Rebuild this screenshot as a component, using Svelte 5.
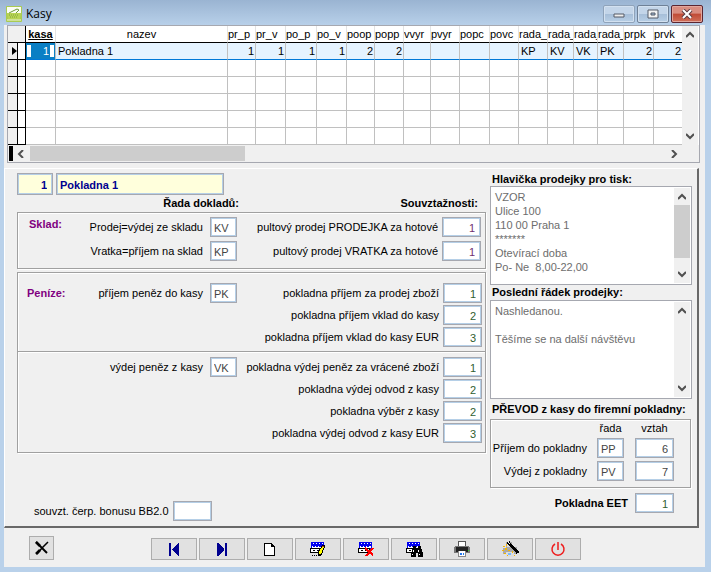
<script>
  const columns = [
    { name: "kasa", width: 30 },
    { name: "nazev" },
    { name: "pr_p", width: 28 },
    { name: "pr_v", width: 30 },
    { name: "po_p", width: 31 },
    { name: "po_v", width: 30 },
    { name: "poop", width: 28 },
    { name: "popp", width: 29 },
    { name: "vvyr", width: 27 },
    { name: "pvyr", width: 29 },
    { name: "popc", width: 30 },
    { name: "povc", width: 29 },
    { name: "rada_", width: 29, text: true },
    { name: "rada_", width: 26, text: true },
    { name: "rada_", width: 24, text: true },
    { name: "rada_", width: 26, text: true },
    { name: "prpk", width: 30 },
    { name: "prvk", width: 28 },
  ];
  const record = ["1", "Pokladna 1", "1", "1", "1", "1", "2", "2", "", "", "", "", "KP", "KV", "VK", "PK", "2", "2"];
  const emptyRows = [1, 2, 3, 4, 5];

  const groups = [
    {
      id: "sklad",
      title: "Sklad:",
      tone: "violet",
      series: [
        { label: "Prodej=výdej ze skladu", value: "KV" },
        { label: "Vratka=příjem na sklad", value: "KP" },
      ],
      relations: [
        { label: "pultový prodej PRODEJKA za hotové", value: "1" },
        { label: "pultový prodej VRATKA za hotové", value: "1" },
      ],
    },
    {
      id: "prijem",
      title: "Peníze:",
      tone: "green",
      series: [{ label: "příjem peněz do kasy", value: "PK" }],
      relations: [
        { label: "pokladna příjem za prodej zboží", value: "1" },
        { label: "pokladna příjem vklad do kasy", value: "2" },
        { label: "pokladna příjem vklad do kasy EUR", value: "3" },
      ],
    },
    {
      id: "vydej",
      title: "",
      tone: "green",
      series: [{ label: "výdej peněz z kasy", value: "VK" }],
      relations: [
        { label: "pokladna výdej peněz za vrácené zboží", value: "1" },
        { label: "pokladna výdej odvod z kasy", value: "2" },
        { label: "pokladna výběr z kasy", value: "2" },
        { label: "pokladna výdej odvod z kasy EUR", value: "3" },
      ],
    },
  ];

  const transfers = [
    { label: "Příjem do pokladny", series: "PP", relation: "6" },
    { label: "Výdej z pokladny", series: "PV", relation: "7" },
  ];

  const header = "VZOR\nUlice 100\n110 00 Praha 1\n*******\nOtevírací doba\nPo- Ne  8,00-22,00";
  const footer = "Nashledanou.\n\nTěšíme se na další návštěvu";

  const tools = [
    { icon: "first", label: "První" },
    { icon: "last", label: "Poslední" },
    { icon: "new", label: "Nový" },
    { icon: "edit", label: "Upravit" },
    { icon: "delete", label: "Smazat" },
    { icon: "find", label: "Hledat" },
    { icon: "print", label: "Tisk" },
    { icon: "wizard", label: "Průvodce" },
    { icon: "power", label: "Konec" },
  ];
</script>

{#snippet chevron(d)}
  <svg class="chevron" width="8" height="8" viewBox="0 0 8 8"><path {d} /></svg>
{/snippet}

{#snippet sheet()}
  <path fill="#0000f0" d="M2 1h13v7H2z" />
  <path fill="#fff" d="M4 2h1v1H4zM7 2h1v1H7zM10 2h1v1h-1zM13 2h1v1h-1zM3 5h11v2H3z" />
  <path fill="#0000f0" d="M4 5h2v1H4zM7 5h2v1H7zM10 5h2v1h-2z" />
  <path d="M1 7h12v5H1z" />
  <path fill="#fff" d="M2 8h10v3H2z" />
  <path d="M4 9h2v1H4zM8 9h2v1H8z" />
{/snippet}

{#snippet group(g)}
  <section class="group">
    <h2>{g.title}</h2>
    <div class="series">
      {#each g.series as f, i}
        <div class="field">
          <label for="{g.id}-s{i}">{f.label}</label>
          <input class="code" id="{g.id}-s{i}" value={f.value} />
        </div>
      {/each}
    </div>
    <div class="relations">
      {#each g.relations as f, i}
        <div class="field">
          <label for="{g.id}-r{i}">{f.label}</label>
          <input class="number {g.tone}" id="{g.id}-r{i}" value={f.value} />
        </div>
      {/each}
    </div>
  </section>
{/snippet}

<div class="window">
  <header class="titlebar">
    <svg width="16" height="16" viewBox="0 0 16 16">
      <rect width="16" height="16" rx="1" fill="#a9cb52" />
      <path d="M1 1h14v6H1z" fill="#fbfdf3" />
      <path d="M1 7h14l-1 6H2z" fill="#b9d455" />
      <path d="M3 9h10M4 11h8" stroke="#7da63a" stroke-dasharray="1 1" />
      <path d="M3 7l8-4 2 1-3 3" fill="none" stroke="#6b9b3a" />
      <path d="M1 14h14" stroke="#f4f8dc" />
    </svg>
    <h1>Kasy</h1>
    <div class="controls">
      <button aria-label="Minimalizovat">
        <svg width="12" height="10" viewBox="0 0 12 10"><path d="M1 5h10v3H1z" fill="#eee" stroke="#555b66" /></svg>
      </button>
      <button aria-label="Maximalizovat">
        <svg width="12" height="10" viewBox="0 0 12 10"><path d="M1 1h10v8H1z" fill="#f4f4f4" stroke="#555b66" /><path d="M4 4h4v2H4z" fill="#9fb9d4" stroke="#555b66" /></svg>
      </button>
      <button class="close" aria-label="Zavřít">
        <svg width="12" height="10" viewBox="0 0 12 10"><path d="M2 1l8 8M10 1L2 9" stroke="#5a3a40" stroke-width="4" /><path d="M2 1l8 8M10 1L2 9" stroke="#fff" stroke-width="2" /></svg>
      </button>
    </div>
  </header>

  <main>
    <div class="browse">
      <div class="browse-body">
        <table>
          <colgroup>
            <col style="width: 10px" />
            <col style="width: 8px" />
            {#each columns as c}
              <col style={c.width ? `width: ${c.width}px` : null} />
            {/each}
          </colgroup>
          <thead>
            <tr>
              <th class="marker" colspan="2"></th>
              {#each columns as c, i}
                <th class:key={i === 0} class:center={i === 1}>{c.name}</th>
              {/each}
            </tr>
          </thead>
          <tbody>
            <tr class="current">
              <td class="marker"><svg width="6" height="8" viewBox="0 0 6 8"><path d="M0 0l5 4-5 4z" /></svg></td>
              <td class="deleted"></td>
              {#each columns as c, i}
                {#if i === 0}
                  <td class="editing"><input aria-label="kasa" value={record[i]} /></td>
                {:else}
                  <td class:text={c.text || i === 1}>{record[i]}</td>
                {/if}
              {/each}
            </tr>
            {#each emptyRows as r}
              <tr>
                <td class="marker"></td>
                <td class="deleted"></td>
                {#each columns as c}<td></td>{/each}
              </tr>
            {/each}
          </tbody>
        </table>
        <div class="vscroll">
          {@render chevron("M0 6l4-4 4 4")}
          {@render chevron("M0 2l4 4 4-4")}
        </div>
      </div>
      <div class="hscroll">
        <span class="splitter"></span>
        {@render chevron("M6 0L2 4l4 4")}
        <div class="track"><div class="thumb"></div></div>
        {@render chevron("M2 0l4 4-4 4")}
      </div>
    </div>

    <div class="panel">
      <div class="left">
        <div class="identity">
          <input class="id" aria-label="Číslo kasy" value="1" />
          <input class="name" aria-label="Název kasy" value="Pokladna 1" />
        </div>
        <div class="captions">
          <span>Řada dokladů:</span>
          <span>Souvztažnosti:</span>
        </div>
        <div class="box stock">{@render group(groups[0])}</div>
        <div class="box money">
          {@render group(groups[1])}
          {@render group(groups[2])}
        </div>
        <div class="field bonus">
          <label for="bonus">souvzt. čerp. bonusu BB2.0</label>
          <input class="number" id="bonus" />
        </div>
      </div>

      <div class="right">
        <label class="caption" for="header">Hlavička prodejky pro tisk:</label>
        <div class="memo">
          <textarea id="header" value={header}></textarea>
          <div class="vscroll">
            {@render chevron("M0 6l4-4 4 4")}
            <div class="thumb"></div>
            {@render chevron("M0 2l4 4 4-4")}
          </div>
        </div>
        <label class="caption" for="footer">Poslední řádek prodejky:</label>
        <div class="memo">
          <textarea id="footer" value={footer}></textarea>
          <div class="vscroll">
            {@render chevron("M0 6l4-4 4 4")}
            {@render chevron("M0 2l4 4 4-4")}
          </div>
        </div>
        <h2 class="caption">PŘEVOD z kasy do firemní pokladny:</h2>
        <div class="box transfer">
          <div class="row heads">
            <span class="code">řada</span>
            <span class="number">vztah</span>
          </div>
          {#each transfers as t, i}
            <div class="row">
              <label for="transfer{i}">{t.label}</label>
              <input class="code" id="transfer{i}" value={t.series} />
              <input class="number" aria-label="{t.label} vztah" value={t.relation} />
            </div>
          {/each}
        </div>
        <div class="row eet">
          <label for="eet">Pokladna EET</label>
          <input class="number green" id="eet" value="1" />
        </div>
      </div>
    </div>

    <footer>
      <button class="cancel" aria-label="Zrušit">
        <svg width="14" height="14" viewBox="0 0 14 14" fill="none" stroke="#000"><path d="M1 1l11 11" stroke-width="2" /><path d="M13 1L7 7l-5 6" stroke-width="1.5" /><path d="M1 1l4 4M1 13l4-4" stroke-width="2.5" /></svg>
      </button>
      <div class="tools">
        {#each tools as t}
          <button aria-label={t.label}>
            <svg width="18" height="16" viewBox="0 0 18 16" shape-rendering={t.icon === "power" ? "auto" : "crispEdges"}>
              {#if t.icon === "first"}
                <path fill="#000090" d="M4 2h2v13H4zM14 2v13h-1L7 9V8l6-6z" />
              {:else if t.icon === "last"}
                <path fill="#000090" d="M12 2h2v13h-2zM4 2v13h1l6-6V8L5 2z" />
              {:else if t.icon === "new"}
                <path d="M3 2h8v1h1v1h1v1h1v10H3z" />
                <path fill="#fff" d="M4 3h6v3h3v8H4z" />
                <path d="M10 3h1v2h2v1h-3z" />
              {:else if t.icon === "edit"}
                {@render sheet()}
                <path d="M13 4h3v2l-4 9H9v-4z" />
                <path fill="#ff0" d="M13 6h2l-3 7h-2v-2z" />
                <path fill="#a33" d="M13 5h2v1h-2z" />
                <path d="M3 14h1v1H3zM5 14h1v1H5zM7 14h1v1H7z" />
              {:else if t.icon === "delete"}
                {@render sheet()}
                <path fill="none" stroke="#f00" stroke-width="2" d="M8 7l8 7M16 7l-7 8" />
              {:else if t.icon === "find"}
                {@render sheet()}
                <path d="M8 5h3v2h2V5h3v2l2 5v4h-5v-4h-2v4H6v-4l2-5z" />
                <path fill="#fff" d="M8 9h1v2H8zM13 9h1v2h-1zM7 13h1v1H7zM14 13h1v1h-1z" />
              {:else if t.icon === "print"}
                <path fill="#555" d="M5 0h8v7H5z" />
                <path fill="#fff" d="M6 1h6v5H6z" />
                <path fill="#777" d="M2 5h14l1 2v5H1V7z" />
                <path fill="#222" d="M3 6h12v5H3z" />
                <path fill="#3d3" d="M15 9h1v1h-1z" />
                <path fill="#888" d="M5 10h8v6H5z" />
                <path fill="#fff" d="M6 10h6v5H6z" />
                <path fill="#27e" d="M7 12h2v2H7zM10 12h1v2h-1z" />
              {:else if t.icon === "wizard"}
                <path fill="#aaa" d="M5 1h6v5h5v7H2V7h3z" />
                <path fill="#ddd" d="M6 2h4v4H6zM5 11h8v5H5z" />
                <path fill="#7bf" d="M7 12h3v2H7z" />
                <path fill="#f5b600" d="M2 5h2v1H2zM5 3h1v2H5zM1 9h2v1H1zM4 7h2v2H4zM3 12h2v1H3zM7 9h2v1H7zM6 14h1v1H6zM11 10h1v2h-1zM13 14h1v1h-1z" />
                <path fill="none" stroke="#000" stroke-width="3" d="M7 1l10 11" />
                <path stroke="#fff" d="M7 1l2 2" />
              {:else}
                <path fill="none" stroke="#ee1c1c" stroke-width="1.5" d="M6 3a6 6 0 1 0 6 0M9 1v8" />
              {/if}
            </svg>
          </button>
        {/each}
      </div>
    </footer>
  </main>
</div>

<style>
  .window,
  .window * {
    box-sizing: border-box;
  }

  .window {
    min-height: 100vh;
    padding: 0 6px 5px 4px;
    display: flex;
    flex-direction: column;
    background: linear-gradient(#9ab4d2, #b9d1ea 26px);
    font-family: "Liberation Sans", Arial, sans-serif;
    font-size: 11px;
    line-height: 14px;
    color: #000;
  }

  h1,
  h2 {
    margin: 0;
    font-size: inherit;
  }

  input,
  textarea,
  button {
    font: inherit;
    margin: 0;
    outline: none;
  }

  svg {
    display: block;
    flex: none;
  }

  .titlebar {
    height: 25px;
    padding: 2px 2px 0 2px;
    display: flex;
    align-items: center;
    gap: 4px;
  }

  h1 {
    flex: 1;
    font: 12px/16px "Open Sans", "Noto Sans", sans-serif;
  }

  .controls {
    display: flex;
    gap: 2px;
  }

  .controls button {
    width: 32px;
    height: 18px;
    padding: 0;
    display: flex;
    align-items: center;
    justify-content: center;
    border: 1px solid #6f8197;
    border-radius: 2px;
    box-shadow: inset 0 0 0 1px #d3e1f0;
    background: linear-gradient(#c3d5e9 50%, #a6bed8 50%, #b8cfe6);
  }

  .controls button:first-child {
    border-color: #8fa3ba;
  }

  .controls .close {
    border-color: #5b2530;
    box-shadow: inset 0 0 0 1px #e2a79d;
    background: linear-gradient(#d98d80 45%, #c04a35 50%, #d0705a);
  }

  main {
    flex: 1;
    background: #f0f0f0;
  }

  .browse {
    margin: 0 5px 0 3px;
    border: 1px solid #a6a8b0;
    background: #fff;
  }

  .browse-body {
    display: flex;
    padding-right: 1px;
  }

  table {
    flex: 1;
    width: 100%;
    min-width: 0;
    table-layout: fixed;
    border-collapse: separate;
    border-spacing: 0;
  }

  th,
  td {
    height: 17px;
    padding: 0 1px;
    overflow: hidden;
    white-space: nowrap;
    line-height: 15px;
    border-right: 1px solid #c0c0c0;
    border-bottom: 1px solid #c0c0c0;
  }

  th {
    font-weight: normal;
    text-align: left;
    padding: 0;
    border-right-color: #e3e3e3;
    border-bottom-color: #000;
  }

  th.key {
    font-weight: bold;
    text-decoration: underline;
    text-align: center;
  }

  th.center {
    text-align: center;
  }

  td {
    text-align: right;
  }

  td.text {
    text-align: left;
    padding-left: 2px;
  }

  td.marker,
  td.deleted,
  th.marker {
    padding: 0;
    border-right-color: #000;
    border-bottom-color: #000;
  }

  .marker {
    background: #f0f0f0;
  }

  .marker svg {
    margin-left: 4px;
  }

  .current td:not(.marker, .deleted) {
    background: #e5f3ff;
    border-bottom-color: #0078d7;
  }

  th:last-child,
  td:last-child {
    border-right: none;
  }

  td.editing {
    padding: 0;
  }

  .editing input {
    display: block;
    width: 100%;
    height: 16px;
    padding: 0 5px 0 4px;
    border: 1px solid #0a7fc4;
    border-width: 2px 1px;
    background: linear-gradient(90deg, #fff 4px, #0a7fc4 4px, #0a7fc4 calc(100% - 4px), #fff calc(100% - 4px));
    color: #fff;
    text-align: right;
  }

  .vscroll {
    flex: none;
    width: 16px;
    padding: 5px 0;
    display: flex;
    flex-direction: column;
    align-items: center;
    justify-content: space-between;
    background: #f0f0f0;
  }

  .chevron path {
    fill: none;
    stroke: #505050;
    stroke-width: 2;
  }

  .hscroll {
    height: 17px;
    padding: 1px 21px 1px 1px;
    display: flex;
    align-items: center;
    gap: 4px;
    background: #f0f0f0;
  }

  .splitter {
    width: 4px;
    align-self: stretch;
    background: #000;
  }

  .track {
    flex: 1;
    margin: 0 4px 0 1px;
    align-self: stretch;
  }

  .track .thumb {
    width: 34%;
    height: 100%;
  }

  .thumb {
    background: #cdcdcd;
  }

  .panel {
    margin: 5px 6px 0 0;
    padding: 4px 5px 5px 12px;
    display: flex;
    gap: 4px;
    border: 1px solid #fff;
    border-right: 2px solid #696969;
    border-bottom: 2px solid #696969;
  }

  .left {
    flex: 1;
    display: flex;
    flex-direction: column;
  }

  .right {
    width: 202px;
  }

  .panel input {
    height: 20px;
    padding: 1px 5px 0 3px;
    border: 1px solid #a6a8b0;
    box-shadow: inset 0 0 0 1px #b5cfe7;
    background: #fff;
    color: #444;
  }

  .panel .code {
    width: 27px;
  }

  .panel .number {
    width: 39px;
    text-align: right;
  }

  .panel .violet {
    color: #703070;
  }

  .panel .green {
    color: #306030;
  }

  .identity {
    display: flex;
    gap: 3px;
  }

  .panel .identity input {
    height: 22px;
    background: #ffffdc;
    font-weight: bold;
    color: #000090;
  }

  .panel .identity .id {
    width: 36px;
    text-align: right;
  }

  .identity .name {
    width: 168px;
  }

  .captions {
    display: flex;
    justify-content: space-between;
    padding: 1px 8px 2px 0;
    font-weight: bold;
  }

  .captions span:first-child {
    width: 222px;
    text-align: right;
  }

  .box {
    border: 1px solid #a0a0a0;
    box-shadow: inset 1px 1px #fff, 1px 1px #fff;
  }

  .group {
    display: flex;
    padding: 4px 4px 7px 9px;
  }

  .group h2 {
    flex: none;
    width: 60px;
    padding-left: 2px;
    color: #800080;
  }

  .series {
    width: 150px;
    display: flex;
    flex-direction: column;
    gap: 4px;
  }

  .relations {
    flex: 1;
    display: flex;
    flex-direction: column;
    gap: 4px;
  }

  .field {
    display: flex;
    align-items: center;
    justify-content: flex-end;
    gap: 4px;
    white-space: nowrap;
  }

  .series .field {
    gap: 7px;
  }

  .money {
    margin-top: 3px;
  }

  .money .group {
    padding: 10px 3px 4px 9px;
  }

  .money .group h2 {
    padding: 3px 0 0;
  }

  .money .relations {
    gap: 2px;
  }

  .money .group + .group {
    padding: 5px 3px 9px 9px;
    border-top: 1px solid #a0a0a0;
    box-shadow: inset 0 1px #fff;
  }

  .bonus {
    margin: auto 0 0 17px;
    justify-content: flex-start;
  }

  .caption {
    display: block;
    height: 15px;
    padding-left: 2px;
    font-weight: bold;
    white-space: nowrap;
  }

  .memo {
    height: 99px;
    display: flex;
    padding: 1px;
    border: 1px solid #a6a8b0;
    background: #fff;
  }

  label.caption:first-child {
    height: 13px;
    line-height: 12px;
  }

  h2.caption {
    height: 20px;
    padding-top: 3px;
  }

  textarea {
    flex: 1;
    min-width: 0;
    padding: 2px 3px;
    border: none;
    resize: none;
    overflow: hidden;
    background: #fff;
    color: #6d6d6d;
  }

  .memo .thumb {
    width: 16px;
    height: 53px;
    margin: 4px 0 auto;
  }

  .row {
    display: flex;
    align-items: center;
  }

  .row label {
    flex: 1;
    text-align: right;
    white-space: nowrap;
  }

  .row .code {
    margin-left: 10px;
  }

  .row input.number {
    margin-left: 11px;
  }

  .transfer {
    margin-right: 1px;
    padding: 1px 16px 6px 0;
    display: flex;
    flex-direction: column;
    gap: 3px;
  }

  .heads {
    justify-content: flex-end;
    gap: 11px;
  }

  .heads span,
  .panel .heads .number {
    text-align: center;
  }

  .eet {
    margin: 5px 18px 8px 0;
    font-weight: bold;
  }

  .panel .row.eet input {
    font-weight: normal;
    margin-left: 7px;
  }

  footer {
    display: flex;
    align-items: flex-end;
    gap: 97px;
    padding: 8px 0 7px 25px;
  }

  footer button {
    width: 46px;
    height: 22px;
    padding: 0;
    display: flex;
    align-items: center;
    justify-content: center;
    border: 1px solid #adadad;
    background: #e1e1e1;
  }

  .cancel {
    width: 25px;
    height: 24px;
  }

  .tools {
    display: flex;
    gap: 2px;
  }
</style>
